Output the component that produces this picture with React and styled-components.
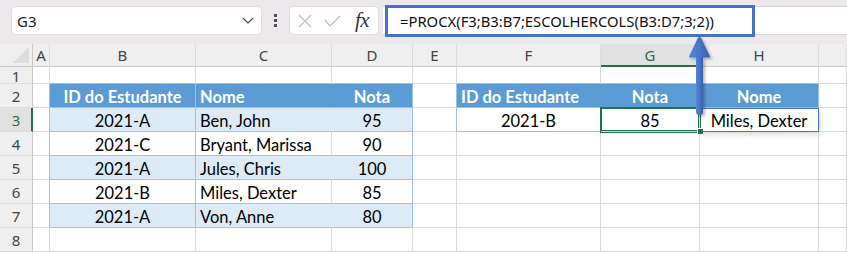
import React from 'react';
import styled, { createGlobalStyle } from 'styled-components';

const GRID = '#dadada';
const TB = '#9bc2e6';
const HEAD = '#5b9bd5';
const BAND = '#ddebf7';
const GREEN = '#217346';
const BLUE = '#4472c4';

const GlobalStyle = createGlobalStyle`
  html, body { margin: 0; padding: 0; background: #fff; }
  body { width: 847px; height: 253px; overflow: hidden; }
`;

const Page = styled.div`
  position: relative;
  width: 847px;
  height: 253px;
  overflow: hidden;
  background: #fff;
`;

const TopBar = styled.div`
  display: flex;
  align-items: flex-start;
  height: 44px;
  padding-top: 6px;
  box-sizing: border-box;
  background: #ece8eb;
`;

const NameBox = styled.div`
  margin-left: 11px;
  width: 251px;
  height: 29px;
  box-sizing: border-box;
  background: #fff;
  border: 1px solid #e0dcdf;
  border-radius: 5px;
  display: flex;
  align-items: center;
  justify-content: space-between;
  padding: 0 7px 0 5px;
  font: 15px "Noto Sans", sans-serif;
  color: #222;
`;

const Dots = styled.div`
  width: 27px;
  height: 29px;
  display: flex;
  flex-direction: column;
  align-items: center;
  justify-content: center;
  gap: 2px;
  & > span {
    width: 3px;
    height: 3px;
    background: #505050;
  }
`;

const FxBox = styled.div`
  width: 90px;
  height: 29px;
  box-sizing: border-box;
  background: #fff;
  border: 1px solid #e0dcdf;
  border-radius: 5px;
  display: flex;
  align-items: center;
  padding-left: 7px;
  gap: 11px;
`;

const Fx = styled.span`
  font: italic 21px "Liberation Serif", serif;
  color: #333;
  margin-left: 3px;
  letter-spacing: -0.5px;
`;

const FormulaBar = styled.div`
  flex: 1;
  margin-left: 4px;
  height: 29px;
  box-sizing: border-box;
  background: #fff;
  border-top: 1px solid #d6d2d5;
  border-bottom: 1px solid #d6d2d5;
  display: flex;
  align-items: center;
`;

const Highlight = styled.div`
  margin-left: 2px;
  width: 370px;
  height: 32px;
  flex: none;
  box-sizing: border-box;
  border: 3px solid ${BLUE};
  display: flex;
  align-items: center;
  padding-left: 12px;
  font: 14.8px "Noto Sans", sans-serif;
  color: #111;
  white-space: nowrap;
`;

const Sheet = styled.div`
  display: grid;
  grid-template-columns: 33px 17px 146px 136px 81px 44px 144px 99px 119px 28px;
  grid-template-rows: 23px 17px repeat(7, 24px);
`;

const ColHead = styled.div`
  box-sizing: border-box;
  background: ${(p) => (p.$sel ? '#e1e1e1' : '#efefef')};
  border-right: 1px solid #dcdcdc;
  border-bottom: ${(p) => (p.$sel ? `2px solid ${GREEN}` : '1px solid #c8c8c8')};
  color: ${(p) => (p.$sel ? GREEN : '#444')};
  font: 15px "Noto Sans", sans-serif;
  display: flex;
  align-items: center;
  justify-content: center;
  padding-top: ${(p) => (p.$sel ? '1px' : '0')};
`;

const Corner = styled.div`
  box-sizing: border-box;
  background: #efefef;
  border-right: 1px solid #c8c8c8;
  border-bottom: 1px solid #c8c8c8;
  display: flex;
  align-items: flex-end;
  justify-content: flex-end;
  padding: 0 3px 3px 0;
  &::after {
    content: '';
    width: 0;
    height: 0;
    border-left: 16px solid transparent;
    border-bottom: 16px solid #dcdcdc;
  }
`;

const RowHead = styled.div`
  box-sizing: border-box;
  background: ${(p) => (p.$sel ? '#e1e1e1' : '#efefef')};
  border-right: ${(p) => (p.$sel ? `2px solid ${GREEN}` : '1px solid #c8c8c8')};
  border-bottom: 1px solid #dcdcdc;
  color: ${(p) => (p.$sel ? GREEN : '#444')};
  font: 15px "Noto Sans", sans-serif;
  display: flex;
  align-items: center;
  justify-content: center;
  padding-top: 1px;
  padding-left: ${(p) => (p.$sel ? '1px' : '0')};
`;

const Cell = styled.div`
  position: relative;
  box-sizing: border-box;
  background: ${(p) => p.$bg};
  border-right: 1px solid ${(p) => p.$br};
  border-bottom: 1px solid ${(p) => p.$bb};
  color: ${(p) => p.$color};
  font: ${(p) => (p.$bold ? 'bold' : 'normal')} 16.5px "Lato", sans-serif;
  display: flex;
  align-items: center;
  justify-content: ${(p) => (p.$align === 'left' ? 'flex-start' : 'center')};
  padding: 3px 4px 0 4px;
  white-space: nowrap;
  ${(p) =>
    p.$selected &&
    `z-index: 3; box-shadow: 0 0 0 1px ${GREEN}, inset 0 0 0 1px ${GREEN};`}
  ${(p) =>
    p.$outlined &&
    `z-index: 2; box-shadow: inset 1px 1px 0 ${BLUE}, 1px 2px 6px rgba(0,0,0,0.18);`}
`;

const FillHandle = styled.span`
  position: absolute;
  right: -4px;
  bottom: -3px;
  width: 5px;
  height: 5px;
  background: ${GREEN};
  border: 1px solid #fff;
  border-right: none;
  border-bottom: none;
`;

const ArrowLayer = styled.svg`
  position: absolute;
  left: 684px;
  top: 34px;
  z-index: 10;
  overflow: visible;
`;

const COLS = ['A', 'B', 'C', 'D', 'E', 'F', 'G', 'H', 'I'];

const t1 = [
  ['2021-A', 'Ben, John', '95'],
  ['2021-C', 'Bryant, Marissa', '90'],
  ['2021-A', 'Jules, Chris', '100'],
  ['2021-B', 'Miles, Dexter', '85'],
  ['2021-A', 'Von, Anne', '80'],
];

function describe(r, c) {
  const d = { text: '', bg: '#fff', br: GRID, bb: GRID, align: 'left', bold: false, color: '#000' };
  const t1c = ['B', 'C', 'D'];
  const t2c = ['F', 'G', 'H'];
  const inT1 = t1c.includes(c);
  const inT2 = t2c.includes(c);
  if (r === 1 && (inT1 || inT2)) d.bb = TB;
  if (c === 'A' && r >= 2 && r <= 7) d.br = TB;
  if (c === 'E' && (r === 2 || r === 3)) d.br = TB;
  if (inT1 && r >= 2 && r <= 7) {
    const i = t1c.indexOf(c);
    const bg = r === 2 ? HEAD : r % 2 === 1 ? BAND : '#fff';
    d.bg = bg;
    d.bb = TB;
    d.br = c === 'C' ? (bg === '#fff' ? GRID : bg) : TB;
    d.align = c === 'C' ? 'left' : 'center';
    if (r === 2) {
      d.text = ['ID do Estudante', 'Nome', 'Nota'][i];
      d.bold = true;
      d.color = '#fff';
    } else {
      d.text = t1[r - 3][i];
    }
  }
  if (inT2 && r === 2) {
    const i = t2c.indexOf(c);
    d.bg = HEAD;
    d.bold = true;
    d.color = '#fff';
    d.bb = TB;
    d.br = c === 'H' ? TB : HEAD;
    d.align = c === 'F' ? 'left' : 'center';
    d.text = ['ID do Estudante', 'Nota', 'Nome'][i];
  }
  if (inT2 && r === 3) {
    d.align = 'center';
    if (c === 'F') {
      d.text = '2021-B';
      d.bb = TB;
      d.br = TB;
    }
    if (c === 'G') {
      d.text = '85';
      d.selected = true;
    }
    if (c === 'H') {
      d.text = 'Miles, Dexter';
      d.br = BLUE;
      d.bb = BLUE;
      d.outlined = true;
    }
  }
  return d;
}

function Chevron() {
  return (
    <svg width="12" height="7" viewBox="0 0 12 7">
      <polyline points="1,1 6,6 11,1" fill="none" stroke="#444" strokeWidth="1.2" />
    </svg>
  );
}

function CancelIcon() {
  return (
    <svg width="16" height="14" viewBox="0 0 16 14">
      <path d="M2 1 L14 13 M14 1 L2 13" stroke="#bdbdbd" strokeWidth="1.2" fill="none" />
    </svg>
  );
}

function CheckIcon() {
  return (
    <svg width="17" height="12" viewBox="0 0 17 12">
      <polyline points="1,5 6,11 16,1" stroke="#bdbdbd" strokeWidth="1.2" fill="none" />
    </svg>
  );
}

function Arrow() {
  return (
    <ArrowLayer width="32" height="86" viewBox="0 0 32 86">
      <defs>
        <linearGradient id="shaftGrad" x1="0" x2="1" y1="0" y2="0">
          <stop offset="0" stopColor="#5585d6" />
          <stop offset="0.6" stopColor="#4472c4" />
          <stop offset="1" stopColor="#365fa8" />
        </linearGradient>
        <filter id="arrowShadow" x="-50%" y="-20%" width="200%" height="140%">
          <feDropShadow dx="2" dy="2" stdDeviation="1.6" floodColor="#000" floodOpacity="0.28" />
        </filter>
      </defs>
      <g filter="url(#arrowShadow)">
        <path d="M12 22 L19 22 L19 78 Q19 81 15.5 81 Q12 81 12 78 Z" fill="url(#shaftGrad)" />
        <path d="M15.5 3 Q16.5 3 17.2 4 L26 22.5 Q26.3 23.5 25 23.5 L6 23.5 Q4.7 23.5 5 22.5 L13.8 4 Q14.5 3 15.5 3 Z" fill="url(#shaftGrad)" />
      </g>
    </ArrowLayer>
  );
}

export default function App() {
  const rows = [1, 2, 3, 4, 5, 6, 7, 8];
  return (
    <Page>
      <GlobalStyle />
      <TopBar>
        <NameBox>
          <span>G3</span>
          <Chevron />
        </NameBox>
        <Dots>
          <span />
          <span />
          <span />
        </Dots>
        <FxBox>
          <CancelIcon />
          <CheckIcon />
          <Fx>fx</Fx>
        </FxBox>
        <FormulaBar>
          <Highlight>=PROCX(F3;B3:B7;ESCOLHERCOLS(B3:D7;3;2))</Highlight>
        </FormulaBar>
      </TopBar>
      <Sheet>
        <Corner />
        {COLS.map((c) => (
          <ColHead key={c} $sel={c === 'G'}>
            {c === 'I' ? '' : c}
          </ColHead>
        ))}
        {rows.map((r) => (
          <React.Fragment key={r}>
            <RowHead $sel={r === 3}>{r}</RowHead>
            {COLS.map((c) => {
              const d = describe(r, c);
              return (
                <Cell
                  key={c}
                  $bg={d.bg}
                  $br={d.br}
                  $bb={d.bb}
                  $align={d.align}
                  $bold={d.bold}
                  $color={d.color}
                  $selected={d.selected}
                  $outlined={d.outlined}
                >
                  {d.text}
                  {d.selected && <FillHandle />}
                </Cell>
              );
            })}
          </React.Fragment>
        ))}
      </Sheet>
      <Arrow />
    </Page>
  );
}
